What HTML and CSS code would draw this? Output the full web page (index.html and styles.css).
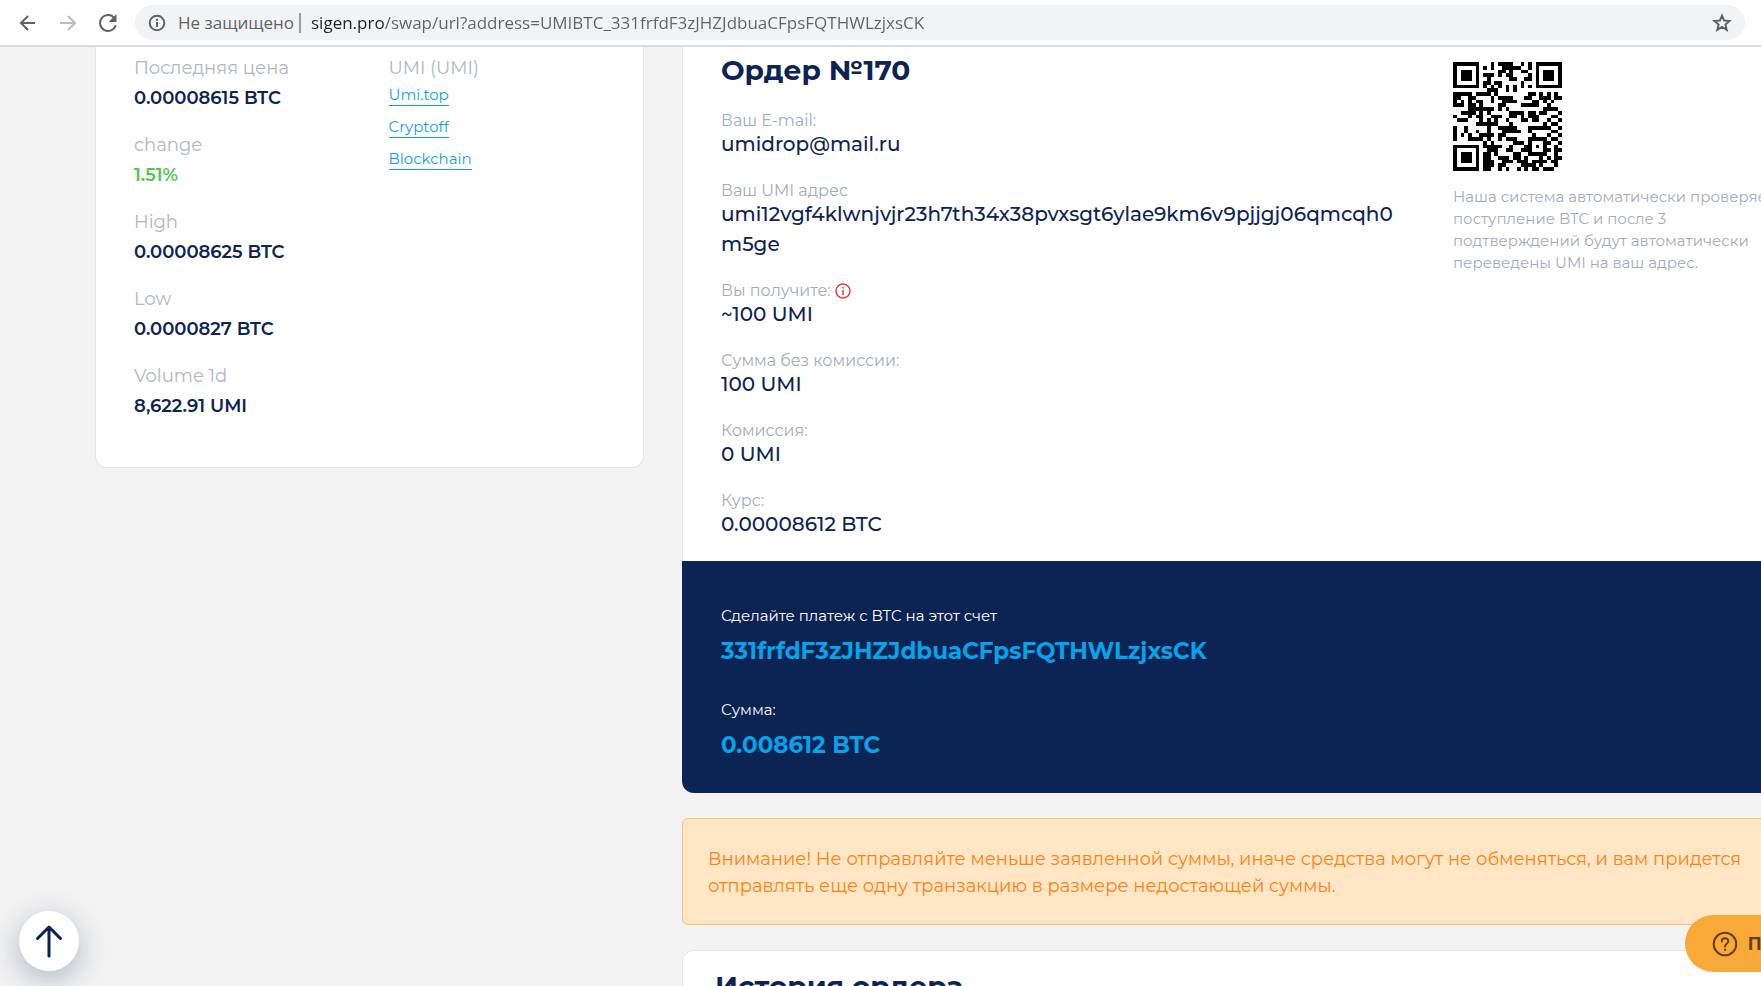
FILE: index.html
```html
<!DOCTYPE html>
<html lang="ru">
<head>
	<meta charset="utf-8">
	<meta name="viewport" content="width=device-width, initial-scale=1.0">
	<title>Ордер №170</title>
	<link rel="stylesheet" href="styles.css">
</head>
<body>
	<div class="browser">
		<button class="nav-btn" type="button" aria-label="Назад">
			<svg width="24" height="24" viewBox="0 0 24 24"><path d="M19 12H5M12 5l-7 7 7 7"/></svg>
		</button>
		<button class="nav-btn off" type="button" aria-label="Вперед">
			<svg width="24" height="24" viewBox="0 0 24 24"><path d="M4 12h15M12 5l7 7-7 7"/></svg>
		</button>
		<button class="nav-btn" type="button" aria-label="Обновить">
			<svg width="24" height="24" viewBox="0 0 24 24"><path d="M18.500 7.200A8 8 0 1 0 19.700 14.300"/><path class="fill" d="M20.500 3v8h-8z"/></svg>
		</button>
		<div class="omnibox">
			<svg class="info" width="18" height="18" viewBox="0 0 18 18"><circle cx="9" cy="9" r="7.300"/><path d="M9 8v5M9 4.800v1.900"/></svg>
			<label class="secure" for="url">Не защищено</label>
			<input id="url" class="url" type="text" value="sigen.pro/swap/url?address=UMIBTC_331frfdF3zJHZJdbuaCFpsFQTHWLzjxsCK">
			<button class="star" type="button" aria-label="В закладки">
				<svg width="20" height="20" viewBox="0 0 20 20"><path d="M10 2.600l2.100 5 5.400.5-4.100 3.500 1.300 5.300-4.700-2.900-4.700 2.900 1.300-5.300L2.500 8.100l5.400-.5z"/></svg>
			</button>
		</div>
	</div>

	<div class="view">
		<div class="page">
			<div class="card stats">
				<dl class="prices">
					<dt>Последняя цена</dt>
					<dd>0.00008615 BTC</dd>
					<dt>change</dt>
					<dd class="up">1.51%</dd>
					<dt>High</dt>
					<dd>0.00008625 BTC</dd>
					<dt>Low</dt>
					<dd>0.0000827 BTC</dd>
					<dt>Volume 1d</dt>
					<dd>8,622.91 UMI</dd>
				</dl>
				<div class="links">
					<p>UMI (UMI)</p>
					<ul>
						<li><a href="#">Umi.top</a></li>
						<li><a href="#">Cryptoff</a></li>
						<li><a href="#">Blockchain</a></li>
					</ul>
				</div>
			</div>

			<div class="main">
				<div class="card order">
					<div class="order-top">
						<div class="order-info">
							<h1>Ордер №170</h1>
							<dl class="fields">
								<dt>Ваш E-mail:</dt>
								<dd>umidrop@mail.ru</dd>
								<dt>Ваш UMI адрес</dt>
								<dd>umi12vgf4klwnjvjr23h7th34x38pvxsgt6ylae9km6v9pjjgj06qmcqh0m5ge</dd>
								<dt>Вы получите:<svg class="hint" width="16" height="16" viewBox="0 0 16 16"><circle cx="8" cy="8" r="7"/><path d="M8 7v5M8 4v1.600"/></svg></dt>
								<dd>~100 UMI</dd>
								<dt>Сумма без комиссии:</dt>
								<dd>100 UMI</dd>
								<dt>Комиссия:</dt>
								<dd>0 UMI</dd>
								<dt>Курс:</dt>
								<dd>0.00008612 BTC</dd>
							</dl>
						</div>
						<div class="order-qr">
							<svg id="qr" class="qr" viewBox="0 0 29 29" shape-rendering="crispEdges"><path d=""/></svg>
							<p>Наша система автоматически проверяет поступление BTC и после 3 подтверждений будут автоматически переведены UMI на ваш адрес.</p>
						</div>
					</div>
					<dl class="pay">
						<dt>Сделайте платеж с BTC на этот счет</dt>
						<dd id="address">331frfdF3zJHZJdbuaCFpsFQTHWLzjxsCK</dd>
						<dt>Сумма:</dt>
						<dd>0.008612 BTC</dd>
					</dl>
				</div>

				<div class="alert">Внимание! Не отправляйте меньше заявленной суммы, иначе средства могут не обменяться, и вам придется отправлять еще одну транзакцию в размере недостающей суммы.</div>

				<div class="card history">
					<h2>История ордера</h2>
				</div>
			</div>
		</div>
	</div>

	<button class="to-top" type="button" aria-label="Наверх">
		<svg width="28" height="34" viewBox="0 0 28 34"><path d="M14 32V3M2.500 14.500L14 3l11.500 11.500"/></svg>
	</button>
	<button class="support" type="button">
		<svg width="26" height="26" viewBox="0 0 26 26"><circle cx="13" cy="13" r="11.300"/><path d="M9.700 10.400c0-4.300 6.600-4.200 6.600-.2 0 2.600-3.300 2.700-3.300 5.300M13 18.600V19"/></svg>
		<span>Помощь</span>
	</button>
	<script src="qr.js"></script>
</body>
</html>
```
FILE: styles.css
```css
	* {
		box-sizing: border-box;
	}
	html, body {
		height: 100%;
		overflow: hidden;
	}
	body {
		margin: 0;
		display: flex;
		flex-direction: column;
		background-color: #f3f3f3;
		color: #0c2454;
		font-family: Montserrat, Inter, "Open Sans", sans-serif;
		font-size: 18px;
	}
	h1, h2, p, dl, dd, ul {
		margin: 0;
		padding: 0;
	}
	ul {
		list-style: none;
	}
	button {
		border: none;
		padding: 0;
		background: none;
		cursor: pointer;
		font-family: inherit;
	}
	svg {
		display: block;
		fill: none;
		stroke-width: 2;
	}

	/* browser bar */
	.browser {
		display: flex;
		flex: none;
		align-items: center;
		gap: 16px;
		padding: 5px 16px 5px 16px;
		background-color: #fff;
		border-bottom: 2px solid #dadce0;
	}
	.nav-btn {
		stroke: #5f6368;
	}
	.nav-btn.off {
		stroke: #babcbe;
	}
	.nav-btn .fill {
		fill: #5f6368;
		stroke: none;
	}
	.omnibox {
		flex: 1;
		display: flex;
		align-items: center;
		height: 35px;
		padding: 0 13px;
		margin-left: -1px;
		border-radius: 18px;
		background-color: #f1f3f4;
		color: #5f6368;
		font-family: "Segoe UI", "Open Sans", sans-serif;
		font-size: 17px;
	}
	.info {
		stroke: #5f6368;
	}
	.secure {
		margin-left: 12px;
		padding-right: 5px;
		border-right: 2px solid #9a9da1;
		line-height: 20px;
	}
	.url {
		flex: 1;
		min-width: 0;
		border: none;
		outline: none;
		padding: 0;
		margin-left: 10px;
		font: inherit;
		color: #5f6368;
		/* host is darker than the path */
		background: linear-gradient(to right, #202124 73px, #5f6368 73px);
		-webkit-background-clip: text;
		background-clip: text;
		-webkit-text-fill-color: transparent;
	}
	.star {
		stroke: #5f6368;
	}

	/* page */
	.view {
		flex: 1;
		min-height: 0;
		overflow: hidden;
	}
	.page {
		display: grid;
		grid-template-columns: 549px 1fr;
		gap: 38px;
		align-items: start;
		min-width: 1920px;
		padding: 0 95px;
	}
	.card {
		background-color: #fff;
		border: 1px solid #e3e4f0;
		border-radius: 12px;
	}
	.stats {
		display: grid;
		grid-template-columns: 1fr 1fr;
		padding: 7px 36px 28px 38px;
		border-top: none;
		border-top-left-radius: 0;
		border-top-right-radius: 0;
	}
	.prices dt,
	.links p {
		line-height: 29px;
		color: #b1b7c4;
	}
	.prices dd {
		line-height: 30px;
		margin-bottom: 18px;
		font-weight: 600;
	}
	.prices dd.up {
		color: #4bca4b;
	}
	.links {
		padding-left: 18px;
	}
	.links li {
		height: 32px;
	}
	.links a {
		display: inline-block;
		line-height: 20px;
		font-size: 15px;
		color: #109fe6;
		text-decoration: none;
		border-bottom: 1px solid #109fe6;
	}

	.order {
		border-top: none;
		border-bottom: none;
		border-top-left-radius: 0;
		border-top-right-radius: 0;
	}
	.order-top {
		display: grid;
		grid-template-columns: 1fr 333px;
		gap: 48px;
		padding: 6px 38px 0 38px;
	}
	h1, h2 {
		font-size: 28px;
		line-height: 34px;
		font-weight: 700;
	}
	h1 {
		margin-bottom: 25px;
	}
	.fields dt {
		display: flex;
		align-items: center;
		gap: 4px;
		font-size: 16px;
		line-height: 17px;
		height: 17px;
		color: #a5abbd;
	}
	.fields dd {
		margin-bottom: 23px;
		font-size: 20px;
		line-height: 30px;
		font-weight: 500;
		word-break: break-all;
	}
	.fields dd:last-child {
		margin-bottom: 22px;
	}
	.hint {
		stroke: #e53f3f;
		stroke-width: 1.5;
	}
	.order-qr {
		padding-top: 9px;
		font-size: 15px;
		line-height: 22px;
		color: #a5abbd;
	}
	.qr {
		width: 109px;
		height: 109px;
		margin-bottom: 15px;
		fill: #000;
	}
	.pay {
		margin: 0 -1px;
		padding: 40px 39px 28px;
		border-radius: 0 0 12px 12px;
		background-color: #0c2454;
	}
	.pay dt {
		font-size: 15px;
		line-height: 30px;
		color: #fff;
	}
	.pay dd {
		font-size: 23px;
		line-height: 40px;
		font-weight: 700;
		color: #06a3e9;
	}
	.pay dd + dt {
		margin-top: 24px;
	}
	.alert {
		margin: 25px 0;
		padding: 27px 25px 24px;
		border: 1px solid #ffbd7a;
		border-radius: 6px;
		background-color: #ffe6c4;
		color: #ff8113;
		line-height: 27px;
	}
	.history {
		padding: 18px 32px;
	}

	.to-top {
		position: fixed;
		left: 19px;
		bottom: 15px;
		width: 60px;
		height: 60px;
		display: flex;
		align-items: center;
		justify-content: center;
		border-radius: 50%;
		background-color: #fff;
		box-shadow: 0 8px 30px rgba(12, 36, 84, 0.3);
		stroke: #0c2454;
	}
	.support {
		position: fixed;
		left: calc(100% - 76px);
		bottom: 14px;
		height: 57px;
		display: flex;
		align-items: center;
		gap: 10px;
		padding: 0 27px;
		border-radius: 29px;
		background-color: #f9a937;
		color: #643f0c;
		font-family: Roboto, sans-serif;
		font-size: 19px;
		font-weight: 700;
		stroke: #643f0c;
	}
	.to-top svg,
	.support svg {
		flex: none;
		stroke-linecap: round;
		stroke-linejoin: round;
	}
	.to-top svg {
		stroke-width: 3;
	}
	.support span {
		stroke: none;
	}
```
FILE: qr.js
```js
// QR code of the payment address, version 3 (29x29)
var SIZE = 29;
var LEVEL = 1; // 1 = L, 0 = M
var MASK = 2;
var text = document.getElementById('address').textContent;
var dataLen = LEVEL ? 55 : 44;
var eccLen = 70 - dataLen;

function mul(a, b) {
	var r = 0;
	for (var i = 7; i >= 0; i--) {
		r = (r << 1) ^ ((r >>> 7) * 0x11d);
		if ((b >>> i) & 1) r ^= a;
	}
	return r;
}

function ecc(data) {
	var gen = [], rem = [], root = 1, i, j;
	for (i = 0; i < eccLen; i++) {
		gen.push(i === eccLen - 1 ? 1 : 0);
		rem.push(0);
	}
	for (i = 0; i < eccLen; i++) {
		for (j = 0; j < eccLen; j++) {
			gen[j] = mul(gen[j], root);
			if (j + 1 < eccLen) gen[j] ^= gen[j + 1];
		}
		root = mul(root, 2);
	}
	data.forEach(function(b) {
		var f = b ^ rem.shift();
		rem.push(0);
		gen.forEach(function(g, k) {
			rem[k] ^= mul(g, f);
		});
	});
	return rem;
}

var bits = '0100' + ('0000000' + text.length.toString(2)).slice(-8);
for (var i = 0; i < text.length; i++) {
	bits += ('0000000' + text.charCodeAt(i).toString(2)).slice(-8);
}
bits += '0000';
var data = bits.match(/.{8}/g).map(function(b) { return parseInt(b, 2); });
for (var pad = 0xec; data.length < dataLen; pad ^= 0xec ^ 0x11) data.push(pad);
data = data.concat(ecc(data));

var grid = [], used = [];
for (var y = 0; y < SIZE; y++) {
	grid.push([]);
	used.push([]);
}
function set(x, y, dark) {
	if (x < 0 || y < 0 || x >= SIZE || y >= SIZE) return;
	grid[y][x] = !!dark;
	used[y][x] = true;
}

// timing, finders, alignment
for (i = 0; i < SIZE; i++) {
	set(6, i, i % 2 === 0);
	set(i, 6, i % 2 === 0);
}
[[3, 3], [SIZE - 4, 3], [3, SIZE - 4]].forEach(function(c) {
	for (var dy = -4; dy <= 4; dy++) {
		for (var dx = -4; dx <= 4; dx++) {
			var d = Math.max(Math.abs(dx), Math.abs(dy));
			set(c[0] + dx, c[1] + dy, d !== 2 && d !== 4);
		}
	}
});
for (var dy = -2; dy <= 2; dy++) {
	for (var dx = -2; dx <= 2; dx++) {
		set(22 + dx, 22 + dy, Math.max(Math.abs(dx), Math.abs(dy)) !== 1);
	}
}

// format bits
var fmt = LEVEL << 3 | MASK, rem = fmt;
for (i = 0; i < 10; i++) rem = (rem << 1) ^ ((rem >>> 9) * 0x537);
fmt = (fmt << 10 | rem) ^ 0x5412;
function bit(n) { return (fmt >>> n) & 1; }
for (i = 0; i < 6; i++) set(8, i, bit(i));
set(8, 7, bit(6));
set(8, 8, bit(7));
set(7, 8, bit(8));
for (i = 9; i < 15; i++) set(14 - i, 8, bit(i));
for (i = 0; i < 8; i++) set(SIZE - 1 - i, 8, bit(i));
for (i = 8; i < 15; i++) set(8, SIZE - 15 + i, bit(i));
set(8, SIZE - 8, 1);

var masks = [
	function(x, y) { return (x + y) % 2; },
	function(x, y) { return y % 2; },
	function(x, y) { return x % 3; },
	function(x, y) { return (x + y) % 3; },
	function(x, y) { return (Math.floor(x / 3) + Math.floor(y / 2)) % 2; },
	function(x, y) { return x * y % 2 + x * y % 3; },
	function(x, y) { return (x * y % 2 + x * y % 3) % 2; },
	function(x, y) { return ((x + y) % 2 + x * y % 3) % 2; }
];

var n = 0;
for (var right = SIZE - 1; right >= 1; right -= 2) {
	if (right === 6) right = 5;
	for (var v = 0; v < SIZE; v++) {
		for (var j = 0; j < 2; j++) {
			var x = right - j;
			var row = ((right + 1) & 2) === 0 ? SIZE - 1 - v : v;
			if (used[row][x]) continue;
			var dark = n < 560 ? (data[n >> 3] >>> (7 - (n & 7))) & 1 : 0;
			n++;
			grid[row][x] = masks[MASK](x, row) === 0 ? !dark : !!dark;
		}
	}
}

var d = '';
grid.forEach(function(cells, y) {
	cells.forEach(function(dark, x) {
		if (dark) d += 'M' + x + ' ' + y + 'h1v1h-1z';
	});
});
document.querySelector('#qr path').setAttribute('d', d);
```
